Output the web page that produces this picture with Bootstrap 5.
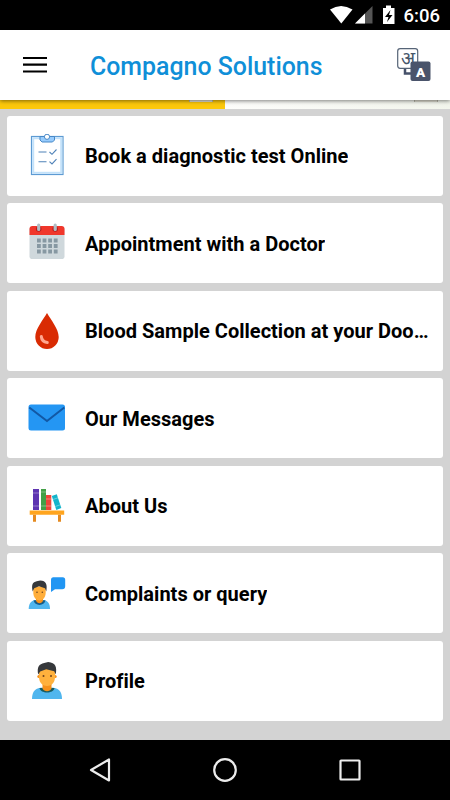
<!DOCTYPE html>
<html lang="en">
<head>
<meta charset="utf-8">
<meta name="viewport" content="width=device-width, initial-scale=1">
<title>Compagno Solutions</title>
<link href="https://cdn.jsdelivr.net/npm/bootstrap@5.3.0/dist/css/bootstrap.min.css" rel="stylesheet">
<style>
body{font-family:Roboto,"Noto Sans",sans-serif;background:#d3d3d3;width:450px;height:800px;overflow:hidden}
svg{display:block;flex:none}
.status-bar{height:30px;background:#000}
.clock{font-size:18.500px;font-weight:500;line-height:30px;margin-left:9px;margin-right:10px;padding-top:1px}
.app-bar{height:70px;padding-left:23px;padding-right:18px;box-shadow:0 1px 4px rgba(0,0,0,.5);z-index:2}
.app-title{font-size:24.900px;font-weight:500;color:#0f8fd8;line-height:32px;margin-left:43px;margin-top:3px}
.banner{height:9px}
.banner-left{background:#fcc80b}
.banner-right{background:linear-gradient(90deg,#fdfdfb,#f2f5ec)}
.chip{width:24px;height:2px;background:#e0dfd2;border:solid #b9b8aa;border-width:0 1px}
.menu-list{padding:6.500px 7px 0;gap:7.500px}
.menu-card{height:80px;border-radius:3px;padding:0 14px 0 18px}
.menu-label{font-size:20px;font-weight:700;color:#000;margin-left:16px;line-height:28px;margin-top:1.500px;letter-spacing:.02px}
.nav-keys{height:60px;background:#000}
</style>
<script src="https://cdn.jsdelivr.net/npm/bootstrap@5.3.0/dist/js/bootstrap.bundle.min.js"></script>
</head>
<body class="d-flex flex-column">
<div class="status-bar d-flex align-items-center justify-content-end text-white">
  <svg width="66" height="30" viewBox="331 0 66 30">
    <path d="M332 9.500Q343 2.500 354.500 9.500L343.300 23.500Z" fill="#fff"/>
    <path d="M374.500 6V23.500H357Z" fill="#555"/><path d="M367 13.500V23.500H357Z" fill="#fff"/>
    <path d="M385 8h3V5.500h5V8h3.500v16H385Z" fill="#fff"/>
    <path d="M392.500 10l-5.500 7h3.500l-1.500 5 5.500-7h-3.500Z" fill="#000"/>
  </svg>
  <span class="clock">6:06</span>
</div>
<header class="app-bar bg-white d-flex align-items-center position-relative">
  <svg width="24" height="18" viewBox="0 0 24 18"><path d="M0 2h24M0 8.700h24M0 15.500h24" stroke="#000" stroke-width="2.200"/></svg>
  <h1 class="app-title mb-0">Compagno Solutions</h1>
  <svg class="ms-auto" width="36" height="36" viewBox="397 47 36 36">
    <path d="M406 67v6.500h6" fill="none" stroke="#46516a" stroke-width="2.500"/>
    <rect x="398.700" y="48.700" width="20" height="19.600" rx="2.500" fill="#fff" stroke="#566477" stroke-width="1.200"/>
    <text x="409" y="65" text-anchor="middle" font-size="18.500" fill="#46566a">अ</text>
    <rect x="411.500" y="61.500" width="20" height="19.500" rx="2" fill="#4a546b"/>
    <text x="421.500" y="76.500" text-anchor="middle" font-size="13.500" font-weight="900" fill="#fff">A</text>
  </svg>
</header>
<div class="banner d-flex">
  <div class="banner-left w-50 d-flex justify-content-end pe-2"><div class="chip me-1"></div></div>
  <div class="banner-right w-50 d-flex justify-content-end pe-2"><div class="chip me-1"></div></div>
</div>
<main class="menu-list d-flex flex-column flex-grow-1">
  <div class="menu-card bg-white d-flex align-items-center">
    <svg width="44" height="44" viewBox="25 134 44 44">
      <rect x="31.500" y="136.500" width="31.500" height="38" fill="#fff" stroke="#5d9bd3" stroke-width="1.200"/>
      <rect x="33.200" y="138.200" width="28" height="34.600" fill="none" stroke="#c3e2fa" stroke-width="2"/>
      <path d="M40 136.500h14.500v3.500l-2 2H42l-2-2Z" fill="#98ccfd" stroke="#4788c7"/>
      <circle cx="47" cy="136.800" r="2.600" fill="#fff" stroke="#4788c7"/>
      <path d="M38.500 152h8M38.500 161.700h8M49.500 152l2.500 2.300 4.500-4.800M49.500 161.700l2.500 2.300 4.500-4.800" fill="none" stroke="#4f82b8" stroke-width="1.100"/>
    </svg>
    <span class="menu-label text-truncate">Book a diagnostic test Online</span>
  </div>
  <div class="menu-card bg-white d-flex align-items-center">
    <svg width="44" height="44" viewBox="25 221.500 44 44">
      <rect x="29.500" y="227" width="35" height="32.500" rx="2.800" fill="#cfd8dc"/>
      <path d="M29.500 235.500v-6a3 3 0 0 1 3-3h29a3 3 0 0 1 3 3v6Z" fill="#f0372b"/>
      <circle cx="38.700" cy="229.500" r="2.800" fill="#b71c1c"/><circle cx="55.200" cy="229.500" r="2.800" fill="#b71c1c"/>
      <path d="M38.700 225.500v4.500M55.200 225.500v4.500" stroke="#b0bec5" stroke-width="3.200" stroke-linecap="round"/>
      <path d="M37 241h21M37 246.500h21M37 252h21" stroke="#8798a2" stroke-width="3.800" stroke-dasharray="3.800 1.800"/>
    </svg>
    <span class="menu-label text-truncate">Appointment with a Doctor</span>
  </div>
  <div class="menu-card bg-white d-flex align-items-center">
    <svg width="44" height="44" viewBox="25 309 44 44">
      <path d="M47 313C43 320 35.300 329 35.300 337a11.700 12 0 0 0 23.400 0C58.700 329 51 320 47 313Z" fill="#d92b03"/>
      <path d="M41.300 336.500c.3 3 2.500 5.500 6 6" fill="none" stroke="#ffa78f" stroke-width="3" stroke-linecap="round"/>
    </svg>
    <span class="menu-label text-nowrap">Blood Sample Collection at your Doo…</span>
  </div>
  <div class="menu-card bg-white d-flex align-items-center">
    <svg width="44" height="44" viewBox="25 396.500 44 44">
      <rect x="28.500" y="405" width="36.500" height="26" rx="2.500" fill="#2496f3"/>
      <path d="M29.300 408L47 421.500 64.300 408" fill="none" stroke="#1258a5" stroke-width="2"/>
    </svg>
    <span class="menu-label text-truncate">Our Messages</span>
  </div>
  <div class="menu-card bg-white d-flex align-items-center">
    <svg width="44" height="44" viewBox="25 484 44 44">
      <path d="M33 489h6v21h-6Z" fill="#5e35b1"/><path d="M41 489h5v21h-5Z" fill="#43a047"/>
      <path d="M46 495h5.300v15H46Z" fill="#f0453a"/><path d="M51.800 496l5-1.700 4.500 13.700-5 1.900Z" fill="#14b4cb"/>
      <path d="M33 493h6M33 506h6M41 492h5M41 506h5M46 499h5.300M46 506h5.300M53 499.500l5-1.700M55.200 506.500l5-1.700" stroke="#fff" stroke-opacity=".35"/>
      <path d="M29.700 510.500h34.500v4.200H29.700Z" fill="#ffa51f"/><path d="M33 514.700h3v7h-3ZM58 514.700h3v7h-3Z" fill="#e58a20"/>
    </svg>
    <span class="menu-label text-truncate">About Us</span>
  </div>
  <div class="menu-card bg-white d-flex align-items-center">
    <svg width="44" height="44" viewBox="25 571.500 44 44">
      <path d="M28.700 609.500c0-6 3-9 8-9h5.500c5 0 7.800 3 7.800 9Z" fill="#50b6ee"/>
      <path d="M33.500 600.800c1 6.200 11 6.200 12 0Z" fill="#185b83"/>
      <path d="M36 597h7v4c-1 3.500-6 3.500-7 0Z" fill="#f7911a"/>
      <path d="M33.300 587h12.400v6c0 10.500-12.400 10.500-12.400 0Z" fill="#ffae3b"/>
      <path d="M32.700 592c-1.500-7 0-9.500 4-10.300l3.500-.7c6 0 7.300 4 6.100 11l-1.300-3.200-6-2-4.800 2Z" fill="#36383b"/>
      <circle cx="37" cy="592.700" r=".8" fill="#70451e"/><circle cx="42.300" cy="592.700" r=".8" fill="#70451e"/>
      <path d="M53 577.700h9.700a2.500 2.500 0 0 1 2.500 2.500v6.500a3 3 0 0 1-3 3H55l-4 2.800v-12.300a2.500 2.500 0 0 1 2-2.500Z" fill="#2196f3"/>
    </svg>
    <span class="menu-label text-truncate">Complaints or query</span>
  </div>
  <div class="menu-card bg-white d-flex align-items-center">
    <svg width="44" height="44" viewBox="25 659 44 44">
      <path d="M32 699c0-8 4-11.500 11-11.500h8c7 0 11 3.500 11 11.500Z" fill="#50b6ee"/>
      <path d="M39.500 688c1 6 14 6 15 0Z" fill="#185b60"/>
      <path d="M42.500 684h9v4.500c-1.500 3.500-7.500 3.500-9 0Z" fill="#f7911a"/>
      <circle cx="38.800" cy="676.500" r="1.500" fill="#f7911a"/><circle cx="55.200" cy="676.500" r="1.500" fill="#f7911a"/>
      <path d="M39 669h16v8c0 12-16 12-16 0Z" fill="#ffb13d"/>
      <path d="M38.200 674.500c-1.500-7.500 1-10.500 6-11.500l4-1c7.500.5 9 5.500 7.500 12.500l-1.500-3.200-8-2-6 2.200Z" fill="#36383b"/>
      <circle cx="43.500" cy="676" r="1" fill="#70451e"/><circle cx="51" cy="676" r="1" fill="#70451e"/>
    </svg>
    <span class="menu-label text-truncate">Profile</span>
  </div>
</main>
<nav class="nav-keys d-flex align-items-center justify-content-center">
  <svg width="280" height="28" viewBox="85 756 280 28" fill="none" stroke="#ececec" stroke-width="2.200" stroke-linejoin="round">
    <path d="M109 759.500v21L91 770Z"/><circle cx="225" cy="770" r="10.800"/><rect x="340.500" y="760.500" width="19" height="19" rx=".5"/>
  </svg>
</nav>
</body>
</html>
